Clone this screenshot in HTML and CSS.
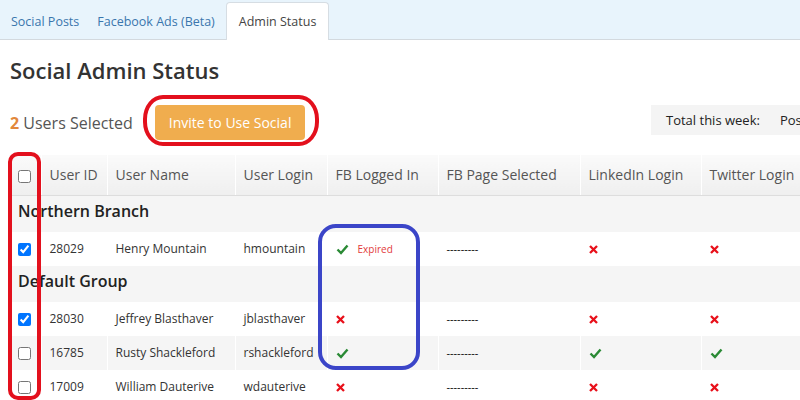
FILE: index.html
```html
<!DOCTYPE html>
<html lang="en">
<head>
  <meta charset="UTF-8" />
  <meta name="viewport" content="width=device-width, initial-scale=1.0" />
  <title>Social Admin Status</title>
  <link rel="stylesheet" href="styles.css">
</head>
<body>
  <nav class="tabs">
    <a class="tab" href="#">Social Posts</a>
    <a class="tab" href="#">Facebook Ads (Beta)</a>
    <a class="tab active" href="#">Admin Status</a>
  </nav>

  <main class="content">
    <h1>Social Admin Status</h1>

    <div class="toolbar">
      <span class="selected"><b>2</b> Users Selected</span>
      <button class="invite">Invite to Use Social</button>
      <div class="totals">
        <span>Total this week:</span>
        <span>Posts: 14</span>
        <span>Likes: 32</span>
      </div>
    </div>

    <table class="users">
      <colgroup>
        <col class="c-cb"><col class="c-id"><col class="c-name"><col class="c-login">
        <col class="c-fb"><col class="c-page"><col class="c-li"><col class="c-tw">
      </colgroup>
      <thead>
        <tr>
          <th><input type="checkbox"></th>
          <th>User ID</th>
          <th>User Name</th>
          <th>User Login</th>
          <th>FB Logged In</th>
          <th>FB Page Selected</th>
          <th>LinkedIn Login</th>
          <th>Twitter Login</th>
        </tr>
      </thead>
      <tbody id="rows"></tbody>
    </table>
  </main>

  <!-- markup drawn over the screenshot -->
  <div class="mark mark-button"></div>
  <div class="mark mark-checks"></div>
  <div class="mark mark-fb"></div>

  <script>
    const groups = [
      { name: "Northern Branch", users: [
        { id: 28029, name: "Henry Mountain", login: "hmountain", checked: true, fb: "expired", li: false, tw: false }
      ]},
      { name: "Default Group", users: [
        { id: 28030, name: "Jeffrey Blasthaver", login: "jblasthaver", checked: true, fb: false, li: false, tw: false },
        { id: 16785, name: "Rusty Shackleford", login: "rshackleford", checked: false, fb: true, li: true, tw: true, striped: true },
        { id: 17009, name: "William Dauterive", login: "wdauterive", checked: false, fb: false, li: false, tw: false }
      ]}
    ];

    const yes = '<svg class="ok" width="13" height="11" viewBox="0 0 13 11"><path d="M1.5 5.5 L5 9 L11.5 1.5" fill="none" stroke="#2a8a35" stroke-width="2.4"/></svg>';
    const no = '<svg class="no" width="9" height="9" viewBox="0 0 9 9"><path d="M1 1 L8 8 M8 1 L1 8" fill="none" stroke="#e8101a" stroke-width="2.3"/></svg>';

    function status(v) {
      if (v === "expired") return yes + '<span class="expired">Expired</span>';
      return v ? yes : no;
    }

    const body = document.getElementById('rows');
    groups.forEach(g => {
      body.insertAdjacentHTML('beforeend', `<tr class="group"><td colspan="8">${g.name}</td></tr>`);
      g.users.forEach(u => {
        body.insertAdjacentHTML('beforeend', `
          <tr class="${u.striped ? 'striped' : ''}">
            <td><input type="checkbox" ${u.checked ? 'checked' : ''}></td>
            <td>${u.id}</td>
            <td>${u.name}</td>
            <td>${u.login}</td>
            <td>${status(u.fb)}</td>
            <td class="dash">---------</td>
            <td>${status(u.li)}</td>
            <td>${status(u.tw)}</td>
          </tr>`);
      });
    });
  </script>
</body>
</html>
```

FILE: styles.css
```css
body {
  margin: 0;
  font-family: "Open Sans", Arial, sans-serif;
  color: #333;
  background: #fff;
  overflow: hidden;
  position: relative;
  height: 400px;
}

.tabs {
  display: flex;
  align-items: flex-end;
  height: 40px;
  padding-left: 2px;
  background-color: #e8f4fc;
  border-bottom: 1px solid #d3d9de;
  box-sizing: border-box;
}

.tab {
  display: flex;
  align-items: center;
  height: 36px;
  padding: 0 9px 0 9px;
  font-size: 12.5px;
  color: #3a76ad;
  text-decoration: none;
}

.tab.active {
  height: 37px;
  margin-bottom: -1px;
  margin-left: 2px;
  padding: 0 12px;
  background: #fff;
  color: #444;
  border: 1px solid #d6dde3;
  border-bottom: none;
  border-radius: 4px 4px 0 0;
}

.content {
  width: 900px;
  padding-left: 9px;
}

h1 {
  margin: 15px 0 0 1px;
  font-size: 22px;
  font-weight: 600;
  color: #333;
  line-height: 30px;
}

.toolbar {
  display: flex;
  align-items: center;
  margin-top: 20px;
  height: 35px;
}

.selected {
  font-size: 16px;
  color: #555;
  margin-left: 1px;
}

.selected b {
  color: #e2883b;
}

.invite {
  margin-left: 22px;
  height: 35px;
  padding: 0 14px;
  font-family: inherit;
  font-size: 14px;
  color: #fff;
  background-color: #f0ad4e;
  border: none;
  border-radius: 4px;
}

.totals {
  display: flex;
  align-items: center;
  gap: 20px;
  margin-left: auto;
  margin-top: -5px;
  width: 258px;
  height: 30px;
  padding-left: 15px;
  box-sizing: border-box;
  background-color: #f4f4f4;
  font-size: 13px;
  color: #222;
  white-space: nowrap;
  overflow: hidden;
}

.users {
  margin-top: 15px;
  border-collapse: collapse;
  table-layout: fixed;
  width: 891px;
}

.c-cb { width: 32px; }
.c-id { width: 66px; }
.c-name { width: 128px; }
.c-login { width: 92px; }
.c-fb { width: 111px; }
.c-page { width: 142px; }
.c-li { width: 121px; }
.c-tw { width: 199px; }

.users th {
  height: 39px;
  padding: 0 0 1px 8px;
  text-align: left;
  font-size: 14px;
  font-weight: 400;
  color: #555;
  background: linear-gradient(#fafafa, #efefef);
  border-left: 1px solid #fff;
  border-bottom: 1px solid #ddd;
  white-space: nowrap;
}

.users th:first-child,
.users td:first-child {
  border-left: none;
  padding-left: 9px;
}

.users td {
  height: 32px;
  padding: 0 0 2px 8px;
  font-size: 12px;
  color: #333;
  border-left: 1px solid #fff;
  white-space: nowrap;
  overflow: hidden;
}

.users input {
  margin: 0;
  width: 13px;
  height: 13px;
  vertical-align: middle;
}

.users tr.group td {
  height: 30px;
  padding-bottom: 6px;
  font-size: 16px;
  font-weight: 600;
  color: #222;
  background-color: #f5f5f5;
}

.users tr.striped td {
  background-color: #f5f5f5;
}

.users .dash {
  font-size: 11px;
  color: #000;
}

.ok, .no {
  vertical-align: middle;
}

.expired {
  margin-left: 9px;
  font-size: 10px;
  color: #e23b3b;
  vertical-align: middle;
}

.mark {
  position: absolute;
  box-sizing: border-box;
}

.mark-button {
  left: 143px;
  top: 95px;
  width: 176px;
  height: 51px;
  border: 4px solid #e3101d;
  border-radius: 20px / 24px;
}

.mark-checks {
  left: 8px;
  top: 152px;
  width: 33px;
  height: 248px;
  border: 4px solid #e3101d;
  border-radius: 10px;
}

.mark-fb {
  left: 318px;
  top: 224px;
  width: 102px;
  height: 146px;
  border: 4px solid #3b45c8;
  border-radius: 18px;
}
```
